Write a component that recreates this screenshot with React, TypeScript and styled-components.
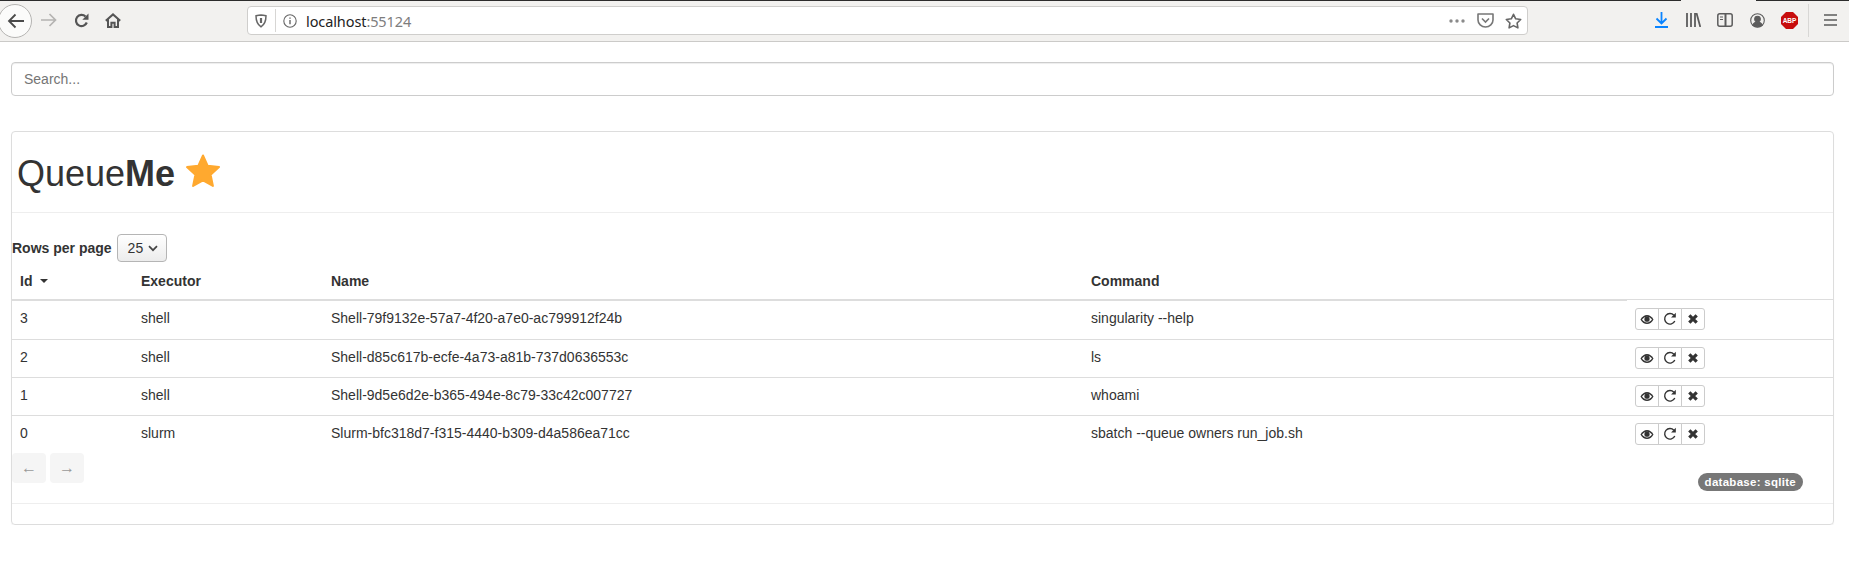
import { createGlobalStyle, styled } from "styled-components";

const GlobalStyle = createGlobalStyle`
  * {
    box-sizing: border-box;
  }
  body {
    margin: 0;
    background: #fff;
    color: #333;
    font-family: "Liberation Sans", Arial, sans-serif;
    font-size: 14px;
    overflow-x: hidden;
  }
`;

const TitleStrip = styled.div`
  display: flex;
  height: 1px;
`;

const StripPart = styled.div<{ $open?: boolean; $width?: number }>`
  background: ${(p) => (p.$open ? "#f2f1ef" : "#2c2c2c")};
  flex: ${(p) => (p.$width ? `0 0 ${p.$width}px` : "1")};
`;

const Toolbar = styled.div`
  display: flex;
  align-items: center;
  height: 41px;
  background: #f2f1ef;
  border-bottom: 1px solid #cbcac8;
  color: #5c5c5c;
  padding-bottom: 2px;
  overflow: hidden;
`;

const BackButton = styled.div`
  width: 34px;
  height: 34px;
  flex: none;
  margin: 2px 0 0 -2px;
  border: 1px solid #b5b4b2;
  border-radius: 50%;
  background: #fbfbfa;
  display: flex;
  align-items: center;
  justify-content: center;
`;

const NavIcon = styled.div<{ $left: number }>`
  display: flex;
  flex: none;
  margin-left: ${(p) => p.$left}px;
`;

const UrlBar = styled.div`
  flex: none;
  width: 1281px;
  height: 29px;
  margin-left: 126px;
  margin-top: 1px;
  background: #fff;
  border: 1px solid #cfcecc;
  border-radius: 4px;
  display: flex;
  align-items: center;
  padding: 0 5px 0 7px;
`;

const UrlDivider = styled.div`
  width: 1px;
  height: 23px;
  background: #d7d6d4;
  margin: 0 7px 0 8px;
`;

const UrlText = styled.div`
  font-family: "Noto Sans", sans-serif;
  font-size: 14.5px;
  margin-left: 9px;
  color: #222;
  flex: 1;
  letter-spacing: -0.1px;
`;

const UrlPort = styled.span`
  color: #7d7d7d;
`;

const UrlIcon = styled.div<{ $left?: number }>`
  display: flex;
  margin-left: ${(p) => p.$left ?? 0}px;
`;

const ToolIcon = styled.div<{ $left: number }>`
  display: flex;
  flex: none;
  margin-left: ${(p) => p.$left}px;
`;

const ToolDivider = styled.div`
  width: 1px;
  height: 33px;
  background: #d8d7d5;
  margin-left: 10px;
`;

const Page = styled.div`
  padding: 20px 15px 0 11px;
`;

const SearchInput = styled.input`
  display: block;
  width: 100%;
  height: 34px;
  padding: 6px 12px;
  font: inherit;
  color: #555;
  background: #fff;
  border: 1px solid #ccc;
  border-radius: 4px;
  box-shadow: inset 0 1px 1px rgba(0, 0, 0, 0.075);
  &::placeholder {
    color: #757575;
    opacity: 1;
  }
`;

const Card = styled.div`
  margin-top: 35px;
  height: 394px;
  border: 1px solid #ddd;
  border-radius: 4px;
  box-shadow: 0 1px 1px rgba(0, 0, 0, 0.05);
`;

const CardHeader = styled.div`
  height: 81px;
  border-bottom: 1px solid #eee;
  padding: 18px 0 0 5px;
  display: flex;
  align-items: flex-start;
`;

const Title = styled.h1`
  margin: 0;
  font-size: 36px;
  font-weight: 400;
  line-height: 48px;
`;

const Bold = styled.b`
  font-weight: 700;
`;

const TitleStar = styled.svg`
  margin: 4px 0 0 10px;
  flex: none;
`;

const CardBody = styled.div`
  height: 291px;
  border-bottom: 1px solid #eee;
  padding-top: 21px;
  position: relative;
`;

const RowsControl = styled.div`
  display: flex;
  align-items: center;
  height: 28px;
`;

const RowsLabel = styled.label`
  font-weight: 700;
`;

const RowsSelect = styled.div`
  margin-left: 5px;
  width: 50px;
  height: 28px;
  border: 1px solid #b5b5b5;
  border-radius: 4px;
  background: linear-gradient(#fff, #ececec);
  display: flex;
  align-items: center;
  gap: 5px;
  padding-left: 10px;
  font-size: 14px;
`;

const Table = styled.table`
  width: 100%;
  table-layout: fixed;
  border-collapse: separate;
  border-spacing: 0;
`;

const Th = styled.th<{ $width: number; $blank?: boolean }>`
  width: ${(p) => p.$width}px;
  height: 39px;
  padding: 8px;
  text-align: left;
  font-weight: 700;
  vertical-align: bottom;
  line-height: 20px;
  border-bottom: ${(p) => (p.$blank ? "1px solid #fff" : "2px solid #ddd")};
  box-shadow: ${(p) => (p.$blank ? "inset 0 -1px 0 #ddd" : "none")};
`;

const SortCaret = styled.span`
  display: inline-block;
  margin: 0 0 2px 8px;
  border-top: 4px solid #333;
  border-left: 4px solid transparent;
  border-right: 4px solid transparent;
  vertical-align: middle;
`;

const Td = styled.td`
  height: 38px;
  padding: 7px 8px 8px;
  line-height: 20px;
  vertical-align: top;
  border-top: 1px solid #ddd;
`;

const FirstRow = styled.tr`
  td {
    border-top: none;
  }
`;

const Actions = styled.div`
  display: flex;
`;

const ActionButton = styled.button`
  width: 24px;
  height: 22px;
  padding: 0;
  margin-left: -1px;
  background: #fff;
  border: 1px solid #ccc;
  color: #333;
  display: flex;
  align-items: center;
  justify-content: center;
  &:first-child {
    margin-left: 0;
    border-radius: 3px 0 0 3px;
  }
  &:last-child {
    border-radius: 0 3px 3px 0;
  }
`;

const Pager = styled.div`
  display: flex;
  gap: 4px;
`;

const PagerButton = styled.button`
  width: 34px;
  height: 30px;
  padding: 0;
  border: none;
  border-radius: 4px;
  background: #f5f5f5;
  color: #999;
  font: inherit;
  font-size: 16px;
`;

const Badge = styled.span`
  position: absolute;
  right: 30px;
  top: 260px;
  height: 18px;
  padding: 0 7px;
  border-radius: 10px;
  background: #777;
  color: #fff;
  font-size: 11.5px;
  font-weight: 700;
  line-height: 18px;
  letter-spacing: 0.28px;
`;

type Job = { id: number; executor: string; name: string; command: string };

const jobs: Job[] = [
  { id: 3, executor: "shell", name: "Shell-79f9132e-57a7-4f20-a7e0-ac799912f24b", command: "singularity --help" },
  { id: 2, executor: "shell", name: "Shell-d85c617b-ecfe-4a73-a81b-737d0636553c", command: "ls" },
  { id: 1, executor: "shell", name: "Shell-9d5e6d2e-b365-494e-8c79-33c42c007727", command: "whoami" },
  { id: 0, executor: "slurm", name: "Slurm-bfc318d7-f315-4440-b309-d4a586ea71cc", command: "sbatch --queue owners run_job.sh" },
];

const EyeIcon = () => (
  <svg width="14" height="11" viewBox="0 0 14 11">
    <path d="M0.5 5.5C2.2 2.5 4.4 1 7 1s4.8 1.5 6.5 4.5C11.8 8.5 9.6 10 7 10S2.2 8.5 0.5 5.5z" fill="#333" />
    <path d="M2 5.5C3.300 3.800 5 2.700 7 2.700s3.700 1.100 5 2.800C10.700 7.300 9 8.400 7 8.400S3.300 7.300 2 5.500z" fill="#fff" />
    <circle cx="7" cy="5.200" r="2.600" fill="#333" />
  </svg>
);

const RefreshIcon = () => (
  <svg width="14" height="14" viewBox="0 0 14 14" fill="none">
    <path d="M11.800 9A5.300 5.300 0 1 1 10.900 3.200" stroke="#333" strokeWidth="1.400" />
    <path d="M12.800 0.800v4.700H8.100z" fill="#333" />
  </svg>
);

const CrossIcon = () => (
  <svg width="10" height="10" viewBox="0 0 10 10">
    <path d="M1.300 1.300l7.400 7.400M8.700 1.300l-7.400 7.400" stroke="#333" strokeWidth="3.200" />
  </svg>
);

const App = () => (
  <>
    <GlobalStyle />
    <TitleStrip>
      <StripPart $width={1681} />
      <StripPart $open $width={75} />
      <StripPart />
    </TitleStrip>
    <Toolbar>
      <BackButton>
        <svg width="17" height="16" viewBox="0 0 17 16" fill="none" stroke="#4a4a4a" strokeWidth="1.800">
          <path d="M17 8H2M8.500 1.500L2 8l6.500 6.500" />
        </svg>
      </BackButton>
      <NavIcon $left={9}>
        <svg width="16" height="14" viewBox="0 0 16 14" fill="none" stroke="#b4b3b1" strokeWidth="1.700">
          <path d="M0 7h14.500M8.500 1l6 6-6 6" />
        </svg>
      </NavIcon>
      <NavIcon $left={17}>
        <svg width="15" height="15" viewBox="0 0 15 15" fill="none">
          <path d="M12.800 9.500A5.600 5.600 0 1 1 11.500 3.500" stroke="#555" strokeWidth="2.200" />
          <path d="M14.500 0.500v6.200H8.300z" fill="#555" />
        </svg>
      </NavIcon>
      <NavIcon $left={16}>
        <svg width="16" height="15" viewBox="0 0 16 15" fill="none" stroke="#555" strokeWidth="2">
          <path d="M0.800 7.800L8 1.400l7.200 6.400M3 6.500v7.600h3.400V9.800h3.200v4.300H13V6.500" />
        </svg>
      </NavIcon>
      <UrlBar>
        <svg width="12" height="14" viewBox="0 0 12 14" fill="none" stroke="#666" strokeWidth="1.500">
          <path d="M1 1.800C3 1.300 4.500 1 6 .9c1.500.1 3 .4 5 .9 0 5-1.200 8.700-5 11-3.800-2.300-5-6-5-11z" />
          <path d="M6 4v5" strokeWidth="2.200" />
        </svg>
        <UrlDivider />
        <UrlIcon>
          <svg width="14" height="14" viewBox="0 0 14 14" fill="none" stroke="#666" strokeWidth="1.100">
            <circle cx="7" cy="7" r="6.200" />
            <path d="M7 6v4.300M7 3.400v1.300" strokeWidth="1.400" />
          </svg>
        </UrlIcon>
        <UrlText>
          localhost<UrlPort>:55124</UrlPort>
        </UrlText>
        <UrlIcon>
          <svg width="16" height="4" viewBox="0 0 16 4" fill="#8a8a8a">
            <circle cx="2" cy="2" r="1.700" />
            <circle cx="8" cy="2" r="1.700" />
            <circle cx="14" cy="2" r="1.700" />
          </svg>
        </UrlIcon>
        <UrlIcon $left={12}>
          <svg width="17" height="15" viewBox="0 0 17 15" fill="none" stroke="#777" strokeWidth="1.600">
            <path d="M1 1h15v6a7.500 7 0 0 1-15 0z" strokeLinejoin="round" />
            <path d="M5 5.500l3.500 3.500L12 5.500" />
          </svg>
        </UrlIcon>
        <UrlIcon $left={11}>
          <svg width="17" height="16" viewBox="0 0 17 16" fill="none" stroke="#666" strokeWidth="1.600">
            <path d="M8.500 1.300l2.200 4.500 5 .7-3.600 3.500.8 4.900-4.400-2.300-4.400 2.300.8-4.900L1.300 6.500l5-.7z" strokeLinejoin="round" />
          </svg>
        </UrlIcon>
      </UrlBar>
      <ToolIcon $left={127}>
        <svg width="13" height="16" viewBox="0 0 13 16" fill="none" stroke="#0a84ff" strokeWidth="1.800">
          <path d="M6.500 0v11M1.500 6.500l5 5 5-5M0 15h13" />
        </svg>
      </ToolIcon>
      <ToolIcon $left={18}>
        <svg width="15" height="14" viewBox="0 0 15 14" fill="none" stroke="#5c5c5c" strokeWidth="1.800">
          <path d="M1 0v14M5 0v14M9 0v14M10.500 0l3.800 14" />
        </svg>
      </ToolIcon>
      <ToolIcon $left={16}>
        <svg width="16" height="14" viewBox="0 0 16 14" fill="none" stroke="#5c5c5c" strokeWidth="1.500">
          <rect x=".8" y=".8" width="14.400" height="12.400" rx="2" />
          <path d="M8.500 1v12" strokeWidth="2" />
          <path d="M3 4h3M3 6.500h3" strokeWidth="1" />
        </svg>
      </ToolIcon>
      <ToolIcon $left={17}>
        <svg width="15" height="15" viewBox="0 0 15 15" fill="none" stroke="#5c5c5c" strokeWidth="1.100">
          <circle cx="7.500" cy="7.500" r="6.800" />
          <circle cx="7.500" cy="6" r="2.800" fill="#5c5c5c" />
          <path d="M2.800 12c1-2 2.600-3 4.700-3s3.700 1 4.700 3c-1.300 1.200-3 1.800-4.700 1.800S4.100 13.200 2.800 12z" fill="#5c5c5c" />
        </svg>
      </ToolIcon>
      <ToolIcon $left={16}>
        <svg width="17" height="17" viewBox="0 0 17 17">
          <path d="M5 0h7l5 5v7l-5 5H5l-5-5V5z" fill="#c70d0d" />
          <text x="8.500" y="11" textAnchor="middle" fontFamily="Liberation Sans" fontSize="6.500" fontWeight="700" fill="#fff">
            ABP
          </text>
        </svg>
      </ToolIcon>
      <ToolDivider />
      <ToolIcon $left={15}>
        <svg width="13" height="12" viewBox="0 0 13 12" fill="none" stroke="#5c5c5c" strokeWidth="1.700">
          <path d="M0 1h13M0 6h13M0 11h13" />
        </svg>
      </ToolIcon>
    </Toolbar>
    <Page>
      <SearchInput placeholder="Search..." />
      <Card>
        <CardHeader>
          <Title>
            Queue<Bold>Me</Bold>
          </Title>
          <TitleStar width="36" height="34" viewBox="0 0 36 34">
            <path
              d="M18 1.500l4.700 10.300 11.300 1.300-8.400 7.600 2.300 11.200L18 26.300 8.100 32l2.300-11.200L2 13.100l11.300-1.300z"
              fill="#ffa92f"
              stroke="#ffa92f"
              strokeWidth="2"
              strokeLinejoin="round"
            />
          </TitleStar>
        </CardHeader>
        <CardBody>
          <RowsControl>
            <RowsLabel>Rows per page</RowsLabel>
            <RowsSelect>
              25
              <svg width="10" height="7" viewBox="0 0 10 7" fill="none" stroke="#444" strokeWidth="1.700">
                <path d="M1 1.200l4 4 4-4" />
              </svg>
            </RowsSelect>
          </RowsControl>
          <Table>
            <thead>
              <tr>
                <Th $width={121}>
                  Id
                  <SortCaret />
                </Th>
                <Th $width={190}>Executor</Th>
                <Th $width={760}>Name</Th>
                <Th $width={544}>Command</Th>
                <Th $width={206} $blank />
              </tr>
            </thead>
            <tbody>
              {jobs.map((job, i) => {
                const Row = i === 0 ? FirstRow : "tr";
                return (
                  <Row key={job.id}>
                    <Td>{job.id}</Td>
                    <Td>{job.executor}</Td>
                    <Td>{job.name}</Td>
                    <Td>{job.command}</Td>
                    <Td>
                      <Actions>
                        <ActionButton>
                          <EyeIcon />
                        </ActionButton>
                        <ActionButton>
                          <RefreshIcon />
                        </ActionButton>
                        <ActionButton>
                          <CrossIcon />
                        </ActionButton>
                      </Actions>
                    </Td>
                  </Row>
                );
              })}
            </tbody>
          </Table>
          <Pager>
            <PagerButton>←</PagerButton>
            <PagerButton>→</PagerButton>
          </Pager>
          <Badge>database: sqlite</Badge>
        </CardBody>
      </Card>
    </Page>
  </>
);

export default App;
